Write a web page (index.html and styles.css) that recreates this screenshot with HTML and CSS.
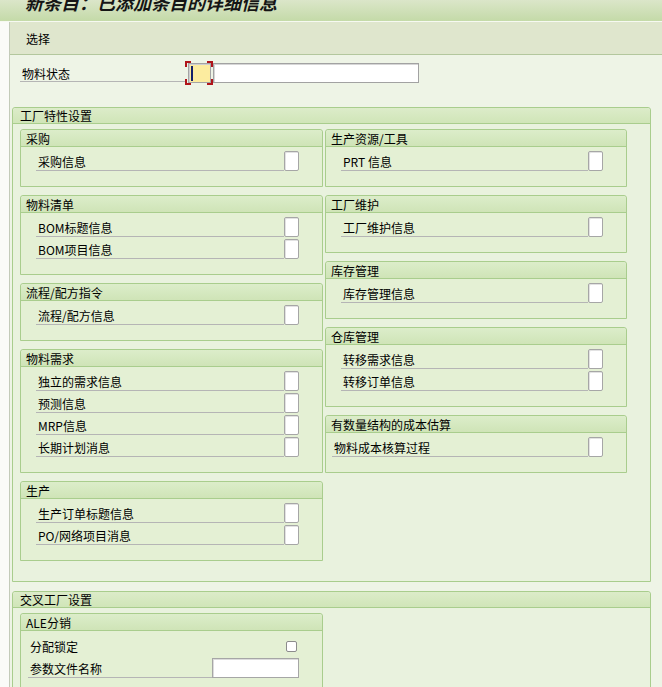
FILE: index.html
```html
<!DOCTYPE html>
<html lang="zh-CN">
<head>
<meta charset="utf-8">
<title>新条目：已添加条目的详细信息</title>
<link rel="stylesheet" href="styles.css">
</head>
<body>
<div class="title"><span>新条目：已添加条目的详细信息</span></div>
<div class="main">
  <div class="toolbar">选择</div>
  <div class="content">
    <div class="status">
      <span class="status-lbl">物料状态</span>
      <span class="focus">
        <i class="c tl"></i><i class="c tr"></i><i class="c bl"></i><i class="c br"></i>
        <span class="ybox"><span class="caret"></span></span>
      </span>
      <span class="inp"></span>
    </div>

    <section class="group">
      <div class="ghead">工厂特性设置</div>
      <div class="gbody">
        <div class="col">
          <div class="sub">
            <div class="shead">采购</div>
            <div class="sbody">
              <div class="row"><span class="lbl">采购信息</span><span class="cb"></span></div>
            </div>
          </div>
          <div class="sub">
            <div class="shead">物料清单</div>
            <div class="sbody">
              <div class="row"><span class="lbl">BOM标题信息</span><span class="cb"></span></div>
              <div class="row"><span class="lbl">BOM项目信息</span><span class="cb"></span></div>
            </div>
          </div>
          <div class="sub">
            <div class="shead">流程/配方指令</div>
            <div class="sbody">
              <div class="row"><span class="lbl">流程/配方信息</span><span class="cb"></span></div>
            </div>
          </div>
          <div class="sub">
            <div class="shead">物料需求</div>
            <div class="sbody">
              <div class="row"><span class="lbl">独立的需求信息</span><span class="cb"></span></div>
              <div class="row"><span class="lbl">预测信息</span><span class="cb"></span></div>
              <div class="row"><span class="lbl">MRP信息</span><span class="cb"></span></div>
              <div class="row"><span class="lbl">长期计划消息</span><span class="cb"></span></div>
            </div>
          </div>
          <div class="sub">
            <div class="shead">生产</div>
            <div class="sbody">
              <div class="row"><span class="lbl">生产订单标题信息</span><span class="cb"></span></div>
              <div class="row"><span class="lbl">PO/网络项目消息</span><span class="cb"></span></div>
            </div>
          </div>
        </div>
        <div class="col">
          <div class="sub">
            <div class="shead">生产资源/工具</div>
            <div class="sbody">
              <div class="row"><span class="lbl">PRT 信息</span><span class="cb"></span></div>
            </div>
          </div>
          <div class="sub">
            <div class="shead">工厂维护</div>
            <div class="sbody">
              <div class="row"><span class="lbl">工厂维护信息</span><span class="cb"></span></div>
            </div>
          </div>
          <div class="sub">
            <div class="shead">库存管理</div>
            <div class="sbody">
              <div class="row"><span class="lbl">库存管理信息</span><span class="cb"></span></div>
            </div>
          </div>
          <div class="sub">
            <div class="shead">仓库管理</div>
            <div class="sbody">
              <div class="row"><span class="lbl">转移需求信息</span><span class="cb"></span></div>
              <div class="row"><span class="lbl">转移订单信息</span><span class="cb"></span></div>
            </div>
          </div>
          <div class="sub">
            <div class="shead">有数量结构的成本估算</div>
            <div class="sbody tight">
              <div class="row"><span class="lbl">物料成本核算过程</span><span class="cb"></span></div>
            </div>
          </div>
        </div>
      </div>
    </section>

    <section class="group g2">
      <div class="ghead">交叉工厂设置</div>
      <div class="gbody">
        <div class="col">
          <div class="sub">
            <div class="shead">ALE分销</div>
            <div class="sbody ale">
              <div class="row"><span class="lbl plain">分配锁定</span><span class="cb-small"></span></div>
              <div class="row"><span class="lbl">参数文件名称</span><span class="field"></span></div>
              <div class="row"></div>
            </div>
          </div>
        </div>
        <div class="col"></div>
      </div>
    </section>
  </div>
</div>
</body>
</html>
```

FILE: styles.css
```css
html, body {
  margin: 0;
  padding: 0;
}
body {
  background: #fafbf8;
  font-family: "Noto Sans CJK SC", "Noto Sans", sans-serif;
  font-size: 12px;
  color: #000;
  height: 687px;
  overflow: hidden;
}

.title {
  height: 21px;
  background: linear-gradient(#dbe6c9, #c4daa8);
  border-bottom: 1px solid #f6f9f1;
  overflow: hidden;
  padding-left: 25px;
}
.title span {
  display: block;
  font-size: 18px;
  font-weight: bold;
  font-style: italic;
  line-height: 18px;
  margin-top: -7px;
  color: #151515;
  white-space: nowrap;
}

.main {
  margin-left: 9px;
  border-left: 1px solid #c3cbb9;
  background: #eef4e6;
  height: 670px;
}
.toolbar {
  height: 32px;
  line-height: 33px;
  background: #dfe6cd;
  border-bottom: 1px solid #b3c79d;
  padding-left: 16px;
}

.content {
  padding: 0 11px 0 0;
}

.status {
  display: flex;
  align-items: flex-start;
  height: 24px;
  margin: 6px 0 0 10px;
}
.status-lbl {
  width: 163px;
  height: 17px;
  line-height: 19px;
  margin-top: 1px;
  padding: 2px 0 0 2px;
  border-bottom: 1px solid #b5b5b5;
}
.focus {
  position: relative;
  width: 28px;
  height: 24px;
  box-sizing: border-box;
  padding: 2px 0 0 3px;
}
.focus .c {
  position: absolute;
  width: 4px;
  height: 4px;
  border: 0 solid #b0141a;
}
.focus .tl { left: 0; top: 0; border-left-width: 2px; border-top-width: 2px; }
.focus .tr { right: 0; top: 0; border-right-width: 2px; border-top-width: 2px; }
.focus .bl { left: 0; bottom: 0; border-left-width: 2px; border-bottom-width: 2px; }
.focus .br { right: 0; bottom: 0; border-right-width: 2px; border-bottom-width: 2px; }
.ybox {
  display: flex;
  align-items: center;
  width: 23px;
  height: 20px;
  box-sizing: border-box;
  border: 1px solid #a4a4a4;
  box-shadow: inset 1px 1px 0 #cfcfcf;
  background: #fcec9f;
  padding-left: 2px;
}
.caret {
  width: 2px;
  height: 15px;
  background: #14206a;
}
.inp {
  width: 206px;
  height: 20px;
  margin-top: 2px;
  box-sizing: border-box;
  border: 1px solid #a2a2a2;
  box-shadow: inset 1px 1px 0 #d6d6d6;
  background: #fff;
}

.group {
  margin: 22px 0 0 2px;
  border: 1px solid #a9cd8d;
  border-radius: 3px 3px 0 0;
  background: #e9f2de;
}
.group.g2 {
  margin-top: 9px;
}
.ghead {
  height: 15px;
  line-height: 16px;
  padding-left: 7px;
  background: linear-gradient(#dcecc9, #d0e5b8);
  border-bottom: 1px solid #a9cd8d;
  border-radius: 3px 3px 0 0;
}
.gbody {
  display: grid;
  grid-template-columns: 303px 302px;
  column-gap: 2px;
  align-items: start;
  padding: 5px 0 20px 7px;
}
.col {
  display: flex;
  flex-direction: column;
  gap: 8px;
}

.sub {
  border: 1px solid #a9cd8d;
  border-radius: 3px 3px 0 0;
  background: #e4f0d4;
}
.shead {
  height: 16px;
  line-height: 17px;
  padding-left: 5px;
  background: linear-gradient(#dcedca, #cfe4b7);
  border-bottom: 1px solid #a9cd8d;
  border-radius: 3px 3px 0 0;
}
.sbody {
  padding: 3px 0 14px 15px;
}
.sbody.tight {
  padding-left: 6px;
}
.sbody.ale {
  padding: 4px 0 14px 7px;
}
.row {
  display: flex;
  align-items: center;
  height: 22px;
  padding-right: 23px;
}
.lbl {
  flex: 1;
  height: 18px;
  line-height: 19px;
  padding: 1px 0 0 2px;
  border-bottom: 1px solid #b5b5b5;
  white-space: nowrap;
}
.lbl.plain {
  border-bottom-color: transparent;
}
.cb {
  width: 15px;
  height: 20px;
  box-sizing: border-box;
  border: 1px solid #a6a6a6;
  border-radius: 2px;
  background: #fff;
  box-shadow: inset 1px 1px 0 #e2e2e2;
}
.cb-small {
  width: 11px;
  height: 11px;
  margin-right: 2px;
  box-sizing: border-box;
  border: 1px solid #8c8c8c;
  border-radius: 2px;
  background: #fff;
}
.field {
  width: 87px;
  height: 20px;
  box-sizing: border-box;
  border: 1px solid #a6a6a6;
  background: #fff;
  box-shadow: inset 1px 1px 0 #dcdcdc;
}
```
